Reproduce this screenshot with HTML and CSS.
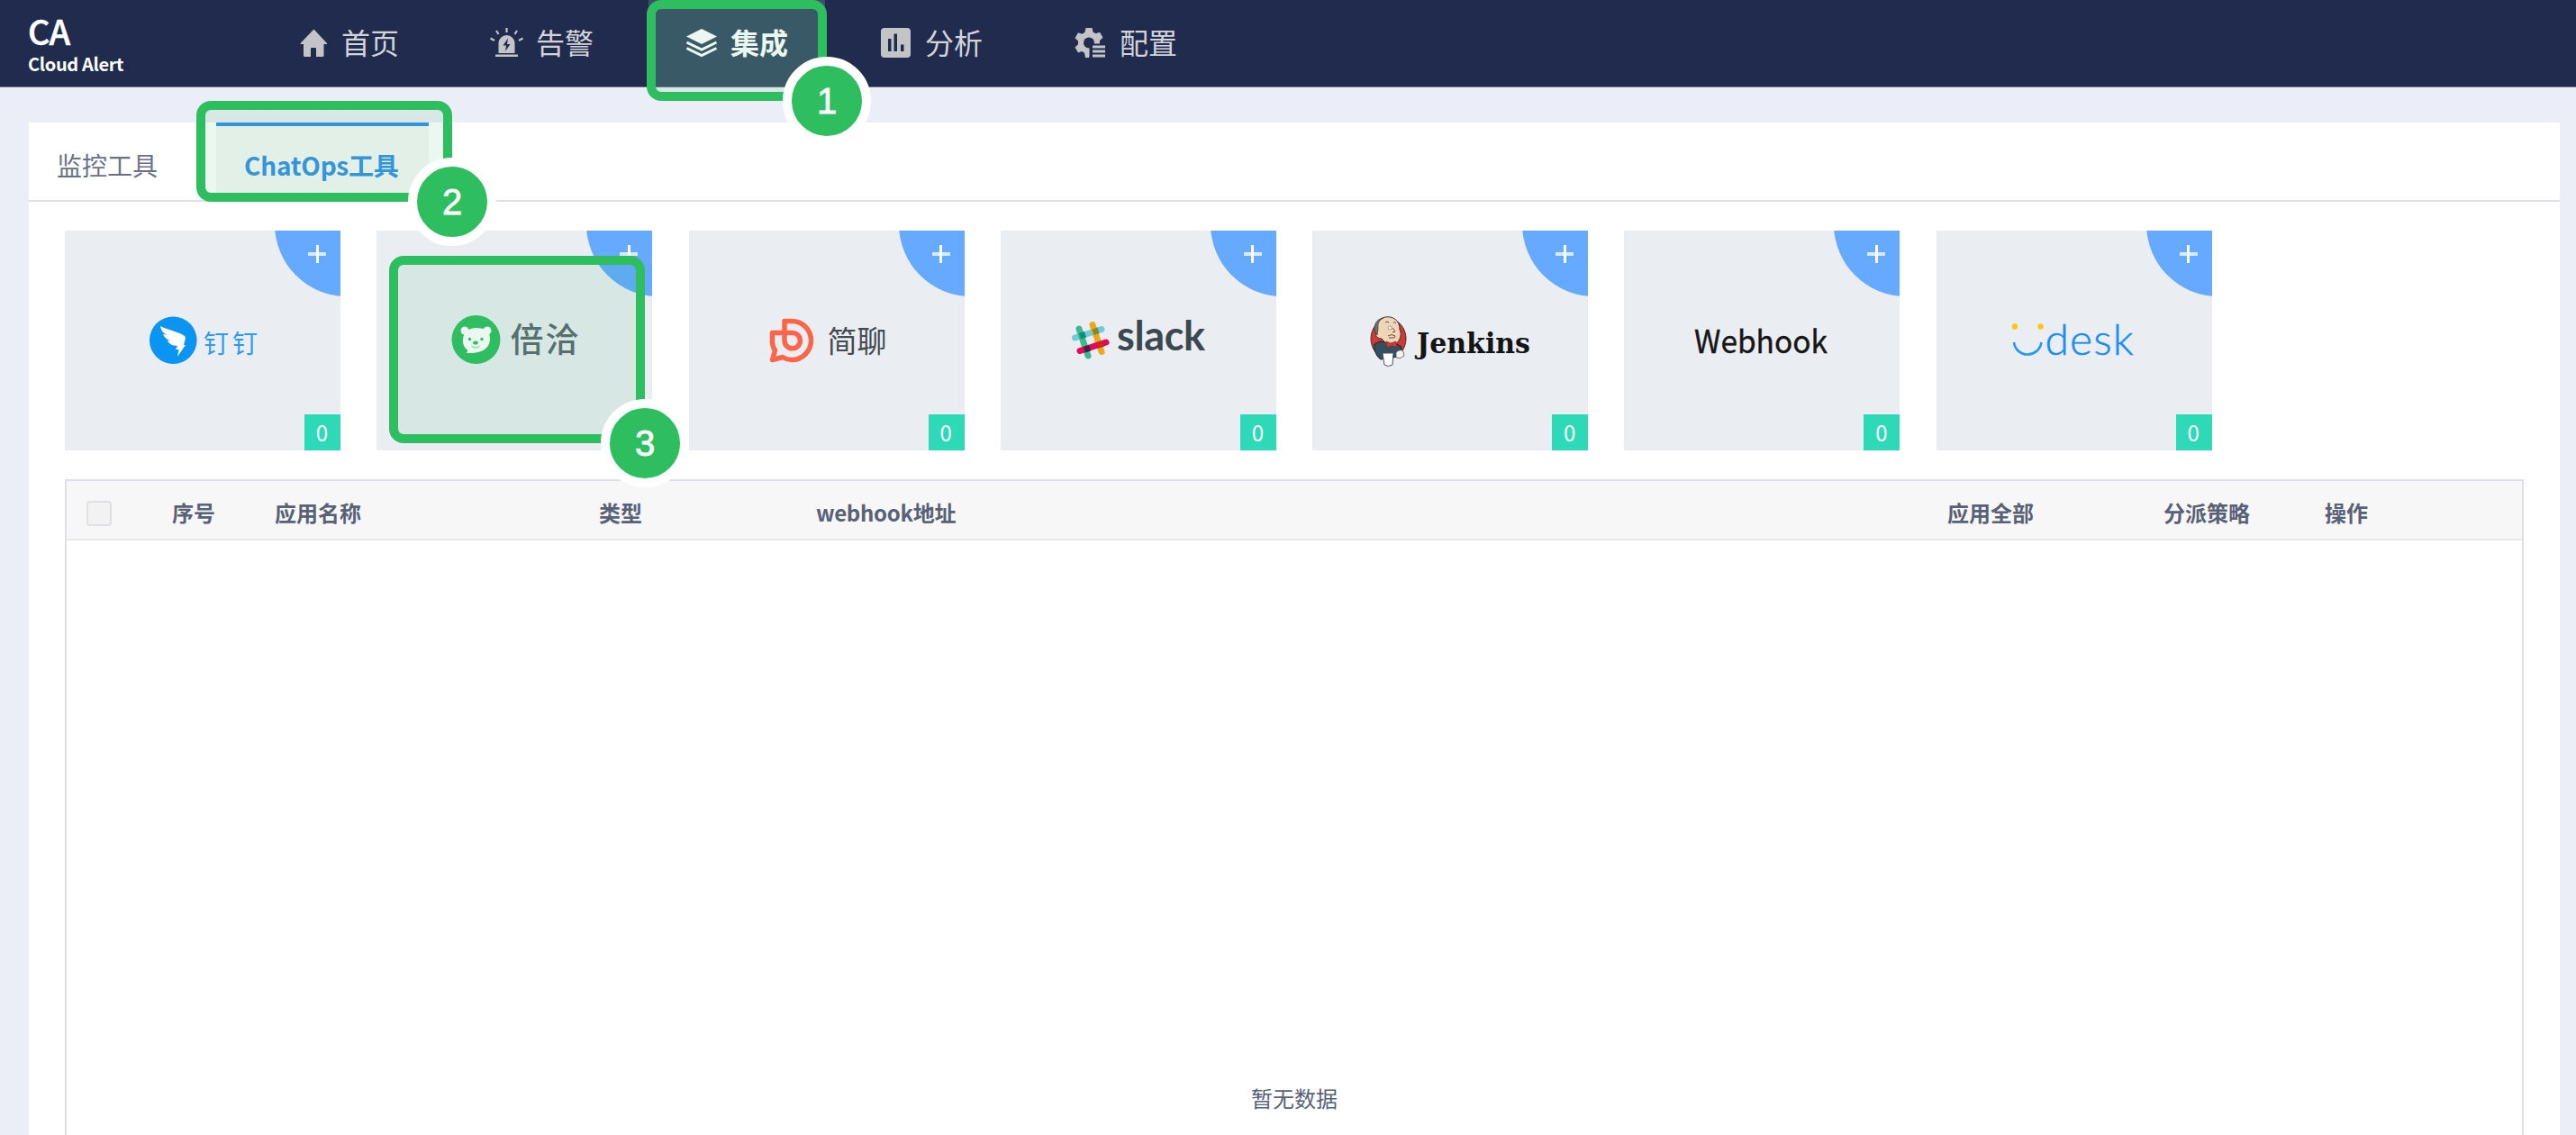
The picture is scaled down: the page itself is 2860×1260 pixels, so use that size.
FILE: index.html
```html
<!DOCTYPE html>
<html lang="zh-CN">
<head>
<meta charset="utf-8">
<title>Cloud Alert</title>
<link rel="stylesheet" href="styles.css">
</head>
<body>
<header class="topbar">
  <div class="brand">
    <div class="brand-short">CA</div>
    <div class="brand-name">Cloud Alert</div>
  </div>
  <nav class="nav">
    <a class="nav-item">
      <svg class="nav-icon" viewBox="0 0 36 36"><path d="M20.500 3.500 6 18.500q-1 1.500 1 1.500h2v12.500q0 1.500 1.500 1.500H17V25q0-1 1-1h4q1 0 1 1v9h7q1.500 0 1.500-1.500V20h2.500q2 0 .5-1.500Z"/></svg>
      <span>首页</span>
    </a>
    <a class="nav-item">
      <svg class="nav-icon" viewBox="0 0 36 36"><path d="M9.500 30V19a9 9 0 0 1 18 0v11ZM6 31.500h25V34H6Z"/><path class="cut" d="m20 13.500-5.500 8H18l-1 6.500 5.500-8H19Z"/><path class="ray" d="M18.500 2v5M7 5l2.500 4M30 5l-2.500 4M.5 13.500l4.500 2.500M36.500 13.500 32 16"/></svg>
      <span>告警</span>
    </a>
    <a class="nav-item active">
      <svg class="nav-icon" viewBox="0 0 36 36"><path d="m19 3 17 8.500L19 20 2 11.500Z"/><path class="layer" d="m2.500 18 16.500 8 16.500-8M2.500 24.500l16.500 8 16.500-8"/></svg>
      <span>集成</span>
    </a>
    <a class="nav-item">
      <svg class="nav-icon" viewBox="0 0 36 36"><rect x="2" y="2" width="33" height="33" rx="4"/><path class="cut" d="M10 14h3.500v14H10Zm6.500-5.500H20V28h-3.500Zm7.500 12h3.500V28H24Z"/></svg>
      <span>分析</span>
    </a>
    <a class="nav-item">
      <svg class="nav-icon" viewBox="0 0 36 36"><path d="M13.500 2h7l1 4.500 3 1.700 4.500-1.500 3.500 6-3.500 3.200v3.600H17.500V33l-.5 2h-4l-1-5.300-3-1.700-4 1.500-3.500-6L5 20.300v-3.800l-3.500-3.300 3.500-6 4.500 1.500 3-1.900Z"/><circle class="cut" cx="17" cy="18.500" r="6"/><path class="cut" d="M19.500 20.500H36V36H19.500Z"/><path d="M21 21.500h14V24.500H21Zm0 5h14V29.500H21Zm0 5h14V34.500H21Z"/></svg>
      <span>配置</span>
    </a>
  </nav>
</header>

<main class="panel">
  <div class="tabs">
    <div class="tab">监控工具</div>
    <div class="tab selected">ChatOps工具</div>
  </div>

  <section class="cards">
    <article class="card">
      <svg class="logo" viewBox="0 0 200 80">
        <circle cx="67.300" cy="39.700" r="26.300" fill="#0a95f2"/>
        <path fill="#fff" d="M53 24c8 4 20 6 27 11 2 2 0 5-1 10h-1l3 0-9 13 1.500-8h-3.500l2-4c-6 0-10-3-11-6l3 0c-4-1-7-4-8-7l5 1c-5-2-7-5-8-10Z"/>
        <text x="101" y="54" font-size="28" textLength="60" fill="#2b9bf3">钉钉</text>
      </svg>
      <span class="add"></span><span class="count">0</span>
    </article>
    <article class="card">
      <svg class="logo" viewBox="0 0 200 80">
        <circle cx="57.500" cy="39" r="27" fill="#2ebe60"/>
        <g fill="#fff"><circle cx="45" cy="29" r="4.500"/><circle cx="70" cy="29" r="4.500"/><path d="M57.500 26c9 0 15 3 15.500 11C73.500 47 66.500 55 46.500 54c2-1 2-3 1-4-8-6-6-24 10-24Z"/></g>
        <g fill="#2ebe60"><circle cx="50.500" cy="38.500" r="1.700"/><circle cx="64" cy="38.500" r="1.700"/><ellipse cx="57" cy="42.500" rx="2.800" ry="2"/></g>
        <path d="M52.500 46q4.500 4 9 0" fill="none" stroke="#a5dfb9" stroke-width="1.200"/>
        <text x="95.500" y="53" font-size="37" textLength="76" font-weight="500" fill="#5c6870">倍洽</text>
      </svg>
      <span class="add"></span><span class="count">0</span>
    </article>
    <article class="card">
      <svg class="logo" viewBox="0 0 200 80">
        <path d="M53 35.500V18.500h8a21 21 0 0 1 0 43q-5 0-10-3L39.500 61.500l3-10.500q-3-5-3-9V31.500H61a8.700 8.700 0 1 1-8 8.500v-5" fill="none" stroke="#ff6549" stroke-width="5.500" stroke-linejoin="round"/>
        <text x="100.500" y="53" font-size="33" textLength="66" fill="#444b50">简聊</text>
      </svg>
      <span class="add"></span><span class="count">0</span>
    </article>
    <article class="card">
      <svg class="logo" viewBox="0 0 200 80">
        <g fill="none" stroke-width="7" stroke-linecap="round">
          <path stroke="#6fcbdc" d="m29.500 37 29.500-9.500"/><path stroke="#e8a820" d="m49 22.500 10 30"/><path stroke="#3eb891" d="m34 27 10 30"/><path stroke="#e3095a" d="m35 51.500 29-9.500"/>
        </g>
        <path fill="#0b9178" d="m34 32 6-2 2 6.500-6 2Z"/><path fill="#7a8c2e" d="m48.500 27.500 6-2 2 6.500-6 2Z"/><path fill="#3f2343" d="m39 47 6-2 2 6.500-6 2Z"/><path fill="#cf271f" d="m54 42 6-2 2 6.500-6 2Z"/>
        <text class="lato" x="76" y="51" font-size="45" font-weight="700" textLength="98" fill="#3b4850">slack</text>
      </svg>
      <span class="add"></span><span class="count">0</span>
    </article>
    <article class="card">
      <svg class="logo" viewBox="0 0 200 80">
        <ellipse cx="31.500" cy="38" rx="19.500" ry="22" fill="#d33833" stroke="#333" stroke-width="1"/>
        <path d="M16 44c-1 6 2 14 7 17l22-4 1-10-5-3-19-3Z" fill="#335061" stroke="#222"/>
        <path d="M18 28C18 8 45 10 44 28c3 5 0 12-4 16-6 3-11 0-16-6-4 0-7-3-7-6Z" fill="#f0d6b7" stroke="#333"/>
        <path d="M26 15c-7 3-6 8-6 12l-1 7c-6-8-2-18 7-19Z" fill="#6c7075" stroke="#333" stroke-width=".7"/>
        <path d="M28 20q2-2 4 0M37 20q2-1 3 1M31 35q4-3 8 0l-1 2h-6M36 26l3 4-3 1" stroke="#685043" fill="none"/>
        <circle cx="33" cy="26" r="2" fill="#fff" stroke="#777" stroke-width=".7"/>
        <path d="m29 41 5 2 6-2 1 6-6-1-5 2Z" fill="#d33833" stroke="#7a2424" stroke-width=".7"/>
        <path d="M25 54h12l-1 13q-5 3-9 0Z" fill="#fff" stroke="#555"/>
        <path d="M40 53q5-4 8-1l1 5q-4 4-9 2Z" fill="#f2f2f2" stroke="#555" stroke-width=".8"/>
        <text class="serif" x="63" y="54" font-size="31" font-weight="700" textLength="126" lengthAdjust="spacingAndGlyphs" fill="#151515">Jenkins</text>
      </svg>
      <span class="add"></span><span class="count">0</span>
    </article>
    <article class="card">
      <svg class="logo" viewBox="0 0 200 80">
        <text x="25" y="54" font-size="35" textLength="148" lengthAdjust="spacingAndGlyphs" fill="#161616" stroke="#161616" stroke-width=".4">Webhook</text>
      </svg>
      <span class="add"></span><span class="count">0</span>
    </article>
    <article class="card">
      <svg class="logo" viewBox="0 0 200 80">
        <circle cx="34" cy="24.500" r="3.200" fill="#f8c814"/><circle cx="62.500" cy="24.500" r="3.200" fill="#f8c814"/>
        <path d="M33 42C35.500 60 60.500 60 63.500 42" fill="none" stroke="#239af3" stroke-width="2.600"/>
        <text class="lato" x="67.500" y="56" font-size="48" font-weight="300" textLength="98" fill="#198df2" stroke="#198df2" stroke-width=".5">desk</text>
      </svg>
      <span class="add"></span><span class="count">0</span>
    </article>
  </section>

  <section class="table">
    <div class="thead">
      <span><i class="checkbox"></i></span>
      <span>序号</span>
      <span>应用名称</span>
      <span>类型</span>
      <span class="mixed">webhook地址</span>
      <span>应用全部</span>
      <span>分派策略</span>
      <span>操作</span>
    </div>
    <div class="empty">暂无数据</div>
  </section>
</main>

<div class="mark mark-1"><b>1</b></div>
<div class="mark mark-2"><b>2</b></div>
<div class="mark mark-3"><b>3</b></div>
</body>
</html>
```
FILE: styles.css
```css
* { box-sizing: border-box; }

body {
  margin: 0;
  position: relative;
  height: 1260px;
  overflow: hidden;
  display: flex;
  flex-direction: column;
  background: #ebeef6;
  color: #596176;
  font-family: "Noto Sans CJK SC", sans-serif;
}

/* top bar */
.topbar {
  flex: none;
  display: flex;
  height: 97px;
  background: #202b4e;
  border-bottom: 1px solid #6a728b;
}
.brand {
  width: 288px;
  padding: 10px 0 0 31px;
  color: #fff;
  font-weight: 700;
}
.brand-short { font-size: 38px; line-height: 48px; letter-spacing: -1px; font-weight: 500; -webkit-text-stroke: .5px #fff; }
.brand-name { font-size: 20px; line-height: 26px; letter-spacing: -.35px; }
.nav { display: flex; gap: 20px; }
.nav-item {
  display: flex;
  align-items: center;
  width: 196px;
  height: 96px;
  padding: 0 0 3px 40px;
  gap: 15px;
  color: #d2d4da;
  font-size: 32px;
  line-height: 48px;
}
.nav-item span { padding-bottom: 2px; }
.nav-item.active { background: #3c4f68; color: #fff; font-weight: 700; }
.nav-icon { width: 36px; height: 36px; fill: #c3c4c6; overflow: visible; }
.active .nav-icon { fill: #fff; }
.nav-icon .cut { fill: #202b4e; }
.nav-icon .ray { fill: none; stroke: #c3c4c6; stroke-width: 2.2; }
.nav-icon .layer { fill: none; stroke: #fff; stroke-width: 3; }

/* content panel */
.panel {
  flex: 1;
  display: flex;
  flex-direction: column;
  margin: 39px 18px 0 32px;
  background: #fff;
}
.tabs {
  display: flex;
  flex: none;
  height: 88px;
  border-bottom: 2px solid #dfe0e7;
}
.tab {
  width: 208px;
  padding: 26px 0 0 31px;
  font-size: 28px;
  line-height: 42px;
  color: #6a7187;
  white-space: nowrap;
}
.tab.selected {
  width: 236px;
  height: 90px;
  padding-top: 22px;
  border-top: 4px solid #3592e6;
  background: #f6f6f7;
  color: #3592e6;
  font-weight: 700;
  letter-spacing: -.2px;
}

/* integration cards */
.cards {
  display: grid;
  grid-template-columns: repeat(7, 306px);
  gap: 40.3px;
  padding: 32px 40px;
  height: 308px;
}
.card {
  position: relative;
  display: flex;
  align-items: center;
  justify-content: center;
  height: 244px;
  background: #eaeef3;
  overflow: hidden;
}
.logo { width: 200px; height: 80px; overflow: visible; }
.lato { font-family: Lato, sans-serif; }
.serif { font-family: "DejaVu Serif", serif; }
.add {
  position: absolute;
  top: -87px;
  right: -87px;
  width: 160px;
  height: 160px;
  border-radius: 50%;
  background: #65aaff;
}
.add::before, .add::after { content: ""; position: absolute; background: #fff; }
.add::before { left: 37px; top: 111px; width: 20px; height: 4px; opacity: .75; }
.add::after { left: 45.500px; top: 103px; width: 3px; height: 20px; }
.count {
  position: absolute;
  right: 0;
  bottom: 0;
  width: 40px;
  height: 40px;
  padding-right: 1px;
  background: #2dd9b6;
  color: #fff;
  font-size: 24px;
  line-height: 40px;
  text-align: center;
}

/* table */
.table {
  flex: 1;
  margin: 0 40px;
  border: 2px solid #dfe0e7;
  border-bottom: 0;
}
.thead {
  display: grid;
  grid-template-columns: 95px 114px 360px 241px 1256px 240px 179px 1fr;
  align-items: center;
  height: 66px;
  padding-left: 22px;
  border-bottom: 2px solid #e8e8eb;
  background: #f7f7f8;
  font-size: 24px;
  font-weight: 700;
  line-height: 36px;
  white-space: nowrap;
}
.checkbox {
  display: block;
  width: 28px;
  height: 28px;
  margin-top: 7px;
  border: 2px solid #dfe0e4;
  border-radius: 4px;
  background: #f2f2f3;
}
.thead span:not(:first-child) { padding-top: 5px; }
.mixed { letter-spacing: -.3px; }
.empty { padding-top: 601px; font-size: 24px; line-height: 36px; text-align: center; }

/* step marks laid over the page */
.mark {
  position: absolute;
  border: 10px solid #2ebe60;
  border-radius: 16px;
  background: rgba(46, 190, 96, .1);
}
.mark b {
  position: absolute;
  right: -59px;
  bottom: -59px;
  width: 98px;
  height: 98px;
  border: 10px solid #fff;
  border-radius: 50%;
  background: #2ebe60;
  color: #fff;
  font: 400 40px/78px "Liberation Sans", sans-serif;
  -webkit-text-stroke: .8px #fff;
  text-align: center;
}
.mark-1 { left: 718px; top: 0; width: 200px; height: 112px; }
.mark-2 { left: 218px; top: 112px; width: 284px; height: 112px; }
.mark-3 { left: 432px; top: 284px; width: 284px; height: 208px; }
```
